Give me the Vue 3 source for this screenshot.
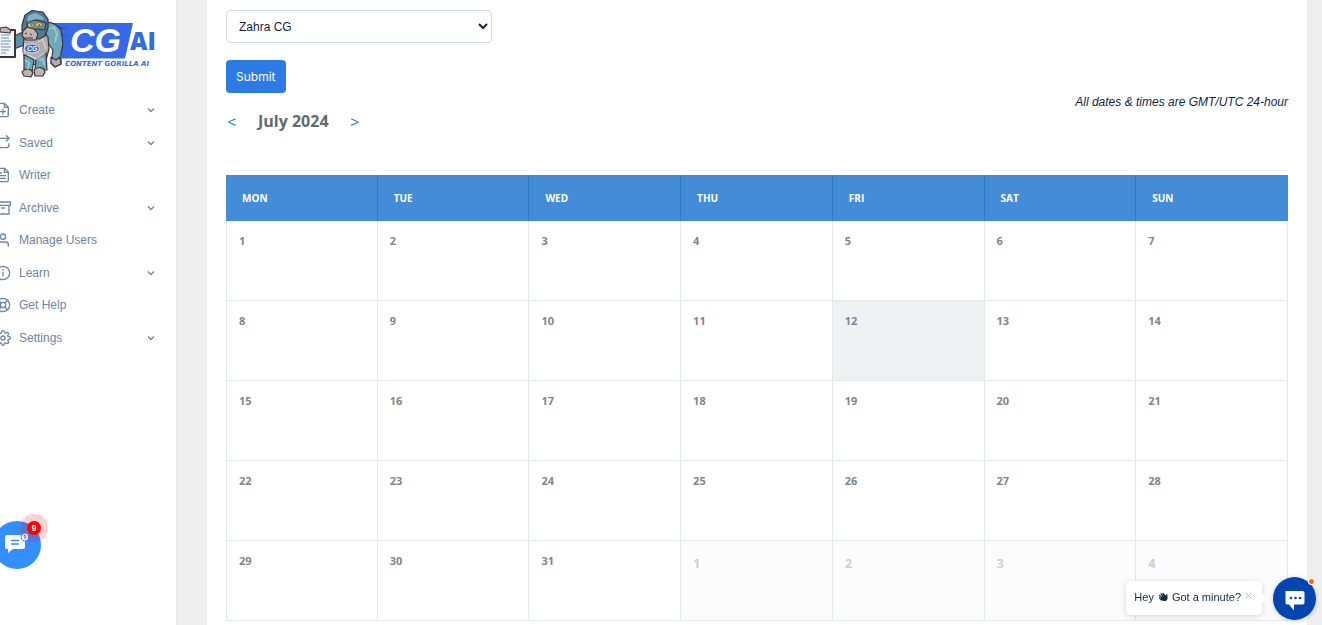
<template>
  <div class="layout">
    <aside class="sidebar">
      <a class="brand" href="#" aria-label="Content Gorilla AI" @click.prevent>
        <svg width="156" height="72" viewBox="0 8 156 72">
          <path d="M52 23H133L125 58.500H62z" fill="#3569e8" />
          <path d="M58 26l10 3h-8zM60 34l8 2h-7z" fill="#2c50b8" />
          <text x="70" y="52" class="logo-cg">CG</text>
          <text x="130" y="50" class="logo-ai">AI</text>
          <text x="65" y="66" class="logo-name">CONTENT GORILLA AI</text>
          <g stroke="#3d3537" stroke-width="1.200" stroke-linejoin="round">
            <path d="M12 37L23 32 27 44 14 49z" fill="#5c8fa8" />
            <path d="M45 23C49 21 58 24 61 31L63 44 61 53 61 64 55 67 51 63 53 50 47 42z" fill="#6fa9bb" />
            <path d="M24 36C30 30 43 30 48 37L49 49 46 60 43 65 26 64 23 51z" fill="#b5adac" />
            <path d="M24 55L29 57 34 60 32 72 24 72z" fill="#68a5b8" />
            <path d="M36 59L46 53 47 70 35 71z" fill="#68a5b8" />
            <path d="M22 72C26 67 32 69 33 73L31 77 24 76z" fill="#c1b3af" />
            <path d="M34 70C38 66 44 67 45 72L43 76H35z" fill="#c1b3af" />
            <path d="M22 25L25 15 32 10.500 43 12 48 19 48 28 45 36 40 39 28 38 22 31z" fill="#4b7b97" />
            <path d="M27 22L36 20 46 23 45 30 38 29 28 30z" fill="#7b8589" />
            <path d="M23 31L27 27 34 29 38 34 36 40 26 40 22 36z" fill="#c1b5af" />
            <path d="M0 30H15V57H0" fill="#f4f7fb" stroke-width="2" />
            <path d="M0 28L6 27 11 30 10 33 0 32z" fill="#c1b3af" />
            <path d="M51 57L56 60 60 57 61 64 55 67 51 63z" fill="#b9aaa5" />
          </g>
          <path d="M28 16L35 13 42 16 45 20 36 19 27 22z" fill="#7cb3c5" />
          <path d="M28 24l4 0 1 2-4 1zM36 24l4-1 2 2-5 1z" fill="#dedb47" />
          <path d="M30 25h2M38 25h2M25 34l2-1M30 34l2 1M25 38h8" stroke="#37363a" stroke-width="1" />
          <path d="M25 43l-1 11M43 40l3 9M28 55l8 4 9-6M38 42l6-4" fill="none" stroke="#d9d1cd" stroke-width="1.500" />
          <path d="M49 29l5-2 3 7-2 8M25 60l4 3-1 6M39 60l4-1 1 6" fill="none" stroke="#99c5cf" stroke-width="2" />
          <path d="M1 35h9M1 38h8M1 41h10M1 44h8M1 47h10M1 50h8M1 53h5" stroke="#6892bc" stroke-width="1" />
          <ellipse cx="32" cy="48.500" rx="7.500" ry="4.500" fill="#3569d6" stroke="#d9e3f4" />
          <text x="27" y="51" class="logo-chest">CG</text>
        </svg>
      </a>

      <nav class="menu">
        <a v-for="item in menuItems" :key="item.label" class="menu-item" href="#" @click.prevent>
          <svg class="menu-icon" viewBox="0 0 24 24">
            <path v-for="d in item.icon" :key="d" :d="d" />
          </svg>
          <span class="menu-label">{{ item.label }}</span>
          <svg v-if="item.children" class="menu-arrow" viewBox="0 0 8 8">
            <path d="M1 2.500l3 3 3-3" />
          </svg>
        </a>
      </nav>
    </aside>

    <main class="panel">
      <form class="user-form" @submit.prevent="submit">
        <select v-model="selectedUser" class="user-select" aria-label="User">
          <option value="zahra">Zahra CG</option>
        </select>
        <button class="btn-submit" type="submit">Submit</button>
      </form>

      <div class="calendar-head">
        <div class="month-nav">
          <button class="month-btn" type="button" aria-label="Previous month">&lt;</button>
          <h2 class="month-title">July 2024</h2>
          <button class="month-btn" type="button" aria-label="Next month">&gt;</button>
        </div>
        <em class="timezone">All dates &amp; times are GMT/UTC 24-hour</em>
      </div>

      <table class="calendar">
        <thead>
          <tr>
            <th v-for="name in weekDays" :key="name">{{ name }}</th>
          </tr>
        </thead>
        <tbody>
          <tr v-for="(week, index) in weeks" :key="index">
            <td
              v-for="day in week"
              :key="day.number"
              :class="{ today: day.today, outside: day.outside }"
            >{{ day.number }}</td>
          </tr>
        </tbody>
      </table>
    </main>

    <button class="support" type="button" aria-label="Support messages">
      <svg width="24" height="22" viewBox="0 0 24 22">
        <path d="M3 4H19a2 2 0 0 1 2 2V16a2 2 0 0 1-2 2H9l-5 4v-4H3a2 2 0 0 1-2-2V6a2 2 0 0 1 2-2z" fill="#fff" />
        <path d="M7 9.500h8M7 13h8" stroke="#338fff" stroke-width="1.500" />
        <circle cx="21" cy="6" r="4" fill="#fff" stroke="#338fff" />
        <path d="M20 5l1-1v4" fill="none" stroke="#5581cb" />
      </svg>
      <span class="support-pulse"><span class="support-count">9</span></span>
    </button>

    <div class="chat-message">
      <span>Hey</span>
      <svg class="wave" width="10" height="10" viewBox="0 0 10 10">
        <path d="M1.500 3.500l3 3M3 2l3.500 3.500M5 1.500l3 3.500M1.500 6l2 2" stroke="#172b42" stroke-width="1.300" stroke-linecap="round" />
        <path d="M3 5l3-2 2 1 .5-2 1 .5V7L8 9H5L3 7z" fill="#172b42" />
      </svg>
      <span>Got a minute?</span>
      <button class="chat-close" type="button" aria-label="Close">
        <svg width="7" height="7" viewBox="0 0 7 7"><path d="M.5.5l6 6M6.500.5l-6 6" stroke="#b5b9be" /></svg>
      </button>
    </div>
    <button class="chat-open" type="button" aria-label="Open chat">
      <svg width="20" height="20" viewBox="0 0 20 20">
        <path d="M.5 0H17.500Q19.500 0 19.500 2V11.500Q19.500 13.500 17.500 13.500H9V19.500L4 13.500H2Q.5 13.500.5 11.500V0z" fill="#fff" />
        <g fill="#0445af"><circle cx="6" cy="7" r="1.300" /><circle cx="10.500" cy="7" r="1.300" /><circle cx="15" cy="7" r="1.300" /></g>
      </svg>
      <span class="chat-dot"></span>
    </button>
  </div>
</template>

<script setup>
import { ref } from 'vue';

const selectedUser = ref('zahra');

const filePath = 'M14 2H6a2 2 0 0 0-2 2v16a2 2 0 0 0 2 2h12a2 2 0 0 0 2-2V8z';

const menuItems = [
  { label: 'Create', children: true, icon: [filePath, 'M14 2v6h6', 'M12 11v7M8.500 14.500h7'] },
  { label: 'Saved', children: true, icon: ['M17 1l4 4-4 4', 'M3 11V9a4 4 0 0 1 4-4h14', 'M7 23l-4-4 4-4', 'M21 13v2a4 4 0 0 1-4 4H3'] },
  { label: 'Writer', icon: [filePath, 'M14 2v6h6', 'M16 13H8M16 17H8M10 9H8'] },
  { label: 'Archive', children: true, icon: ['M21 8v13H3V8', 'M1 3h22v5H1z', 'M10 12h4'] },
  { label: 'Manage Users', icon: ['M20 21v-2a4 4 0 0 0-4-4H8a4 4 0 0 0-4 4v2', 'M16 7a4 4 0 1 1-8 0 4 4 0 0 1 8 0z'] },
  { label: 'Learn', children: true, icon: ['M22 12a10 10 0 1 1-20 0 10 10 0 0 1 20 0z', 'M12 16v-5M12 7v1'] },
  { label: 'Get Help', icon: ['M22 12a10 10 0 1 1-20 0 10 10 0 0 1 20 0z', 'M16 12a4 4 0 1 1-8 0 4 4 0 0 1 8 0z', 'M5 5l4 4M15 15l4 4M15 9l4-4M5 19l4-4'] },
  {
    label: 'Settings',
    children: true,
    icon: [
      'M15 12a3 3 0 1 1-6 0 3 3 0 0 1 6 0z',
      'M19.400 15a1.650 1.650 0 0 0 .33 1.820l.06.06a2 2 0 1 1-2.830 2.830l-.06-.06a1.650 1.650 0 0 0-2.820 1.170V21a2 2 0 0 1-4 0v-.09a1.650 1.650 0 0 0-2.900-1.090l-.06.06a2 2 0 1 1-2.830-2.830l.06-.06A1.650 1.650 0 0 0 3.090 14H3a2 2 0 0 1 0-4h.09a1.650 1.650 0 0 0 1.170-2.820l-.06-.06a2 2 0 1 1 2.830-2.830l.06.06A1.650 1.650 0 0 0 10 3.090V3a2 2 0 0 1 4 0v.09a1.650 1.650 0 0 0 2.820 1.170l.06-.06a2 2 0 1 1 2.830 2.830l-.06.06A1.650 1.650 0 0 0 20.910 10H21a2 2 0 0 1 0 4h-.09a1.650 1.650 0 0 0-1.510 1z',
    ],
  },
];

const weekDays = ['MON', 'TUE', 'WED', 'THU', 'FRI', 'SAT', 'SUN'];

// July 2024 starts on a Monday, the last row runs into August
const weeks = Array.from({ length: 5 }, (_, week) =>
  weekDays.map((_, weekDay) => {
    const date = week * 7 + weekDay + 1;
    return { number: date > 31 ? date - 31 : date, outside: date > 31, today: date === 12 };
  })
);

const submit = () => {
  console.log('Selected user', selectedUser.value);
};
</script>

<style>
body {
  margin: 0;
  background: #efefef;
}
</style>

<style scoped>
.layout {
  display: flex;
  min-height: 100vh;
  font-family: "Liberation Sans", Arial, sans-serif;
  font-size: 12px;
  color: #12263f;
}

.layout *,
.layout *::before {
  box-sizing: border-box;
}

button {
  padding: 0;
  border: none;
  font-family: inherit;
  cursor: pointer;
}

/* Sidebar */
.sidebar {
  flex: none;
  width: 177px;
  overflow: hidden;
  background: #fff;
  border-right: 1px solid #e3ebf6;
}

.brand {
  display: block;
  height: 94px;
  padding-top: 8px;
}

.brand svg {
  display: block;
}

.logo-cg {
  font: italic bold 34px "Liberation Sans", sans-serif;
  fill: #fff;
}

.logo-ai {
  font: 800 24px "Open Sans", sans-serif;
  fill: #3569e8;
}

.logo-name {
  font: italic bold 7px "DejaVu Sans", sans-serif;
  fill: #3569e8;
}

.logo-chest {
  font: italic bold 7px "Liberation Sans", sans-serif;
  fill: #fff;
}

.menu {
  display: grid;
  grid-auto-rows: 1fr;
  height: 260px;
  margin-left: -5px;
  padding-right: 21px;
}

.menu-item {
  display: flex;
  align-items: center;
  color: #6e84a3;
  text-decoration: none;
}

.menu-icon {
  width: 16px;
  height: 16px;
  margin-right: 8px;
  fill: none;
  stroke: currentColor;
  stroke-width: 2;
  stroke-linecap: round;
  stroke-linejoin: round;
}

.menu-label {
  flex: 1;
}

.menu-arrow {
  width: 8px;
  height: 8px;
  fill: none;
  stroke: currentColor;
  stroke-width: 1.300;
}

/* Content */
.panel {
  flex: 1;
  min-width: 0;
  margin: 0 15px 0 30px;
  padding: 10px 19px 4px;
  background: #fff;
}

.user-form {
  display: flex;
  flex-direction: column;
  align-items: flex-start;
  gap: 17px;
}

.user-select {
  width: 25%;
  height: 33px;
  padding: 0 8px;
  border: 1px solid #d2ddec;
  border-radius: 4px;
  background-color: #fff;
  font-family: inherit;
  font-size: 12px;
  color: #12263f;
}

.btn-submit {
  height: 33px;
  padding: 0 10px;
  border-radius: 4px;
  background: #2c7be5;
  color: #fff;
  font-family: Inter, sans-serif;
  font-size: 12px;
}

.calendar-head {
  display: flex;
  justify-content: space-between;
  height: 82px;
}

.month-nav {
  display: flex;
  align-items: center;
  gap: 20px;
  height: 20px;
  margin-top: 18px;
}

.month-btn {
  width: 12px;
  background: none;
  color: #2c7be5;
  font-size: 15px;
}

.month-title {
  margin: 0;
  font: bold 16px "Open Sans", sans-serif;
  color: #5f6b71;
}

.timezone {
  line-height: 18px;
}

/* Calendar */
.calendar {
  width: 100%;
  table-layout: fixed;
  border-collapse: separate;
  border-spacing: 0;
  font-family: "Open Sans", sans-serif;
}

.calendar th {
  height: 46px;
  padding: 0 16px;
  border-right: 1px solid #2c7bc9;
  background: #448cd8;
  color: #fff;
  font-size: 10px;
  text-align: left;
}

.calendar th:last-child {
  border-right: none;
}

.calendar td {
  height: 80px;
  padding: 12px;
  border-right: 1px solid #e5e8e8;
  border-bottom: 1px solid #e5e8e8;
  color: #7f868a;
  font-size: 11px;
  font-weight: bold;
  line-height: 16px;
  vertical-align: top;
}

.calendar td:first-child {
  border-left: 1px solid #e5e8e8;
}

.calendar .today {
  background: #f0f1f3;
}

.calendar .outside {
  background: #fcfcfc;
  color: #cdd0d4;
  font-size: 13px;
  line-height: 20px;
}

/* Floating widgets */
.support {
  position: fixed;
  bottom: 56px;
  left: -7px;
  width: 48px;
  height: 48px;
  border-radius: 50%;
  background: #338fff;
}

.support svg {
  position: absolute;
  top: 10px;
  left: 11px;
}

.support-pulse {
  position: absolute;
  top: -7px;
  right: -7px;
  display: flex;
  align-items: center;
  justify-content: center;
  width: 28px;
  height: 28px;
  border-radius: 50%;
  background: rgba(255, 0, 0, 0.18);
}

.support-count {
  width: 14px;
  border-radius: 50%;
  background: #f00;
  color: #fff;
  font-size: 9px;
  font-weight: bold;
  line-height: 14px;
}

.chat-message {
  position: fixed;
  right: 60px;
  bottom: 10px;
  display: flex;
  align-items: center;
  gap: 4px;
  height: 34px;
  padding: 0 10px 2px 8px;
  border-radius: 5px;
  background: #fff;
  box-shadow: 0 1px 6px rgba(0, 0, 0, 0.16);
  color: #172b42;
  font-size: 11px;
}

.chat-message::before {
  content: "";
  position: absolute;
  top: 12px;
  right: -5px;
  border-top: 5px solid transparent;
  border-bottom: 5px solid transparent;
  border-left: 5px solid #fff;
}

.chat-close {
  display: flex;
  padding-bottom: 3px;
  background: none;
}

.chat-open {
  position: fixed;
  right: 6px;
  bottom: 5px;
  width: 43px;
  height: 43px;
  border-radius: 50%;
  background: #0445af;
  box-shadow: 0 1px 5px rgba(0, 0, 0, 0.2);
}

.chat-open svg {
  position: absolute;
  top: 14px;
  left: 12px;
}

.chat-dot {
  position: absolute;
  top: 2px;
  right: 2px;
  width: 5px;
  height: 5px;
  border-radius: 50%;
  background: #ff6a00;
  box-shadow: 0 0 0 1px #fff;
}
</style>
